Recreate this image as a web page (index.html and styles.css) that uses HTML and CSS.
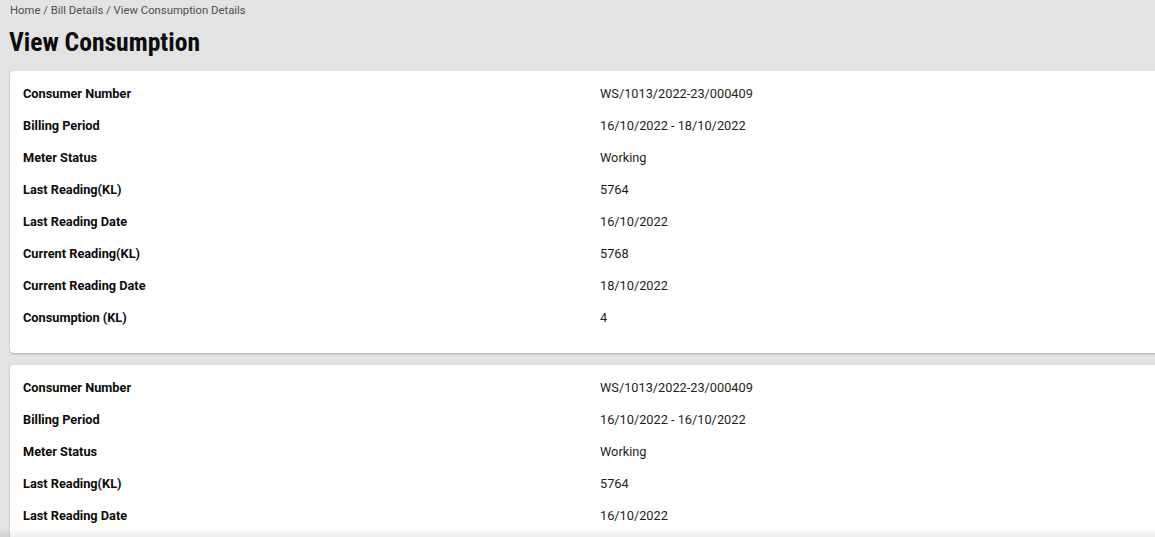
FILE: index.html
```html
<!DOCTYPE html>
<html>
<head>
<meta charset="utf-8">
<link rel="stylesheet" href="styles.css">
</head>
<body>
<div class="page">
  <div class="breadcrumb">Home / Bill Details / View Consumption Details</div>
  <h1 class="title">View Consumption</h1>
  <div class="card">
    <div class="row"><div class="label">Consumer Number</div><div class="value">WS/1013/2022-23/000409</div></div>
    <div class="row"><div class="label">Billing Period</div><div class="value">16/10/2022 - 18/10/2022</div></div>
    <div class="row"><div class="label">Meter Status</div><div class="value">Working</div></div>
    <div class="row"><div class="label">Last Reading(KL)</div><div class="value">5764</div></div>
    <div class="row"><div class="label">Last Reading Date</div><div class="value">16/10/2022</div></div>
    <div class="row"><div class="label">Current Reading(KL)</div><div class="value">5768</div></div>
    <div class="row"><div class="label">Current Reading Date</div><div class="value">18/10/2022</div></div>
    <div class="row"><div class="label">Consumption (KL)</div><div class="value">4</div></div>
  </div>
  <div class="card card-last">
    <div class="row"><div class="label">Consumer Number</div><div class="value">WS/1013/2022-23/000409</div></div>
    <div class="row"><div class="label">Billing Period</div><div class="value">16/10/2022 - 16/10/2022</div></div>
    <div class="row"><div class="label">Meter Status</div><div class="value">Working</div></div>
    <div class="row"><div class="label">Last Reading(KL)</div><div class="value">5764</div></div>
    <div class="row"><div class="label">Last Reading Date</div><div class="value">16/10/2022</div></div>
  </div>
</div>
<div class="bottom-shade"></div>
</body>
</html>
```
FILE: styles.css
```css
html, body {
  margin: 0;
  padding: 0;
  background: #e3e3e3;
  overflow: hidden;
  height: 537px;
}
body {
  font-family: Roboto, "Liberation Sans", sans-serif;
  color: #0b0c0c;
}
.page {
  padding: 4px 0 0 10px;
}
.breadcrumb {
  font-size: 11.3px;
  line-height: 13px;
  color: #505050;
}
.title {
  margin: 10px 0 0 -1px;
  font-size: 25.6px;
  line-height: 30px;
  font-weight: 700;
  font-stretch: 85%;
  color: #0b0c0c;
}
.card {
  margin-top: 14px;
  margin-right: -20px;
  background: #fff;
  border-radius: 4px 0 0 4px;
  box-shadow: 0 1px 2px rgba(0, 0, 0, 0.25);
  padding: 7px 0 19px 13px;
}
.card + .card {
  margin-top: 12px;
}
.card-last {
  padding-bottom: 40px;
}
.row {
  display: grid;
  grid-template-columns: 577px 1fr;
  height: 32px;
  line-height: 32px;
  font-size: 12.75px;
}
.label {
  font-weight: 700;
  color: #0b0c0c;
}
.value {
  color: #1e1e1e;
}
.bottom-shade {
  position: fixed;
  left: 0;
  right: 0;
  bottom: 0;
  height: 9px;
  background: linear-gradient(to bottom, rgba(0,0,0,0), rgba(0,0,0,0.07));
}
```
